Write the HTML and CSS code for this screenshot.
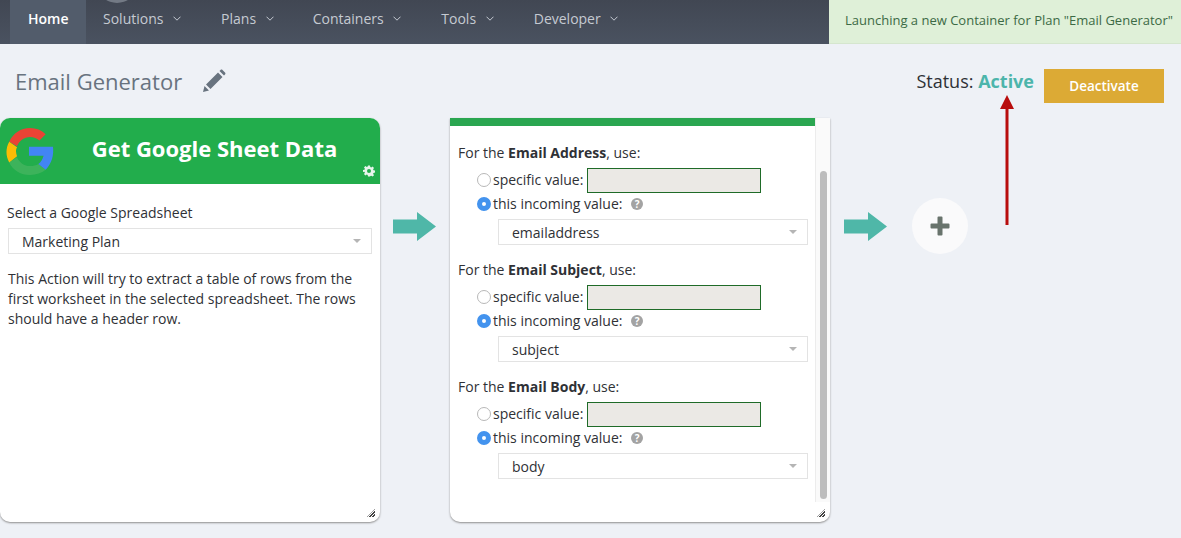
FILE: index.html
```html
<!DOCTYPE html>
<html lang="en">
<head>
    <meta charset="UTF-8">
    <meta name="viewport" content="width=device-width, initial-scale=1.0">
    <title>Email Generator</title>
    <link rel="stylesheet" href="styles.css">
</head>
<body>
    <header class="topbar">
        <nav class="nav">
            <span class="nav-avatar"></span>
            <a class="nav-item nav-home">Home</a>
            <a class="nav-item nav-solutions">Solutions <svg class="chevron" viewBox="0 0 8 5"><path d="M.5.7 4 4.2 7.500.7"/></svg></a>
            <a class="nav-item nav-plans">Plans <svg class="chevron" viewBox="0 0 8 5"><path d="M.5.7 4 4.2 7.500.7"/></svg></a>
            <a class="nav-item nav-containers">Containers <svg class="chevron" viewBox="0 0 8 5"><path d="M.5.7 4 4.2 7.500.7"/></svg></a>
            <a class="nav-item nav-tools">Tools <svg class="chevron" viewBox="0 0 8 5"><path d="M.5.7 4 4.2 7.500.7"/></svg></a>
            <a class="nav-item">Developer <svg class="chevron" viewBox="0 0 8 5"><path d="M.5.7 4 4.2 7.500.7"/></svg></a>
        </nav>
        <div class="notice">Launching a new Container for Plan "Email Generator"</div>
    </header>

    <section class="titlebar">
        <h1 class="plan-name">Email Generator</h1>
        <svg class="pencil" viewBox="0 0 24 24"><path d="M1 23l1.500-6 4.500 4.500z M4 15.500 16 3.500l4.500 4.500L8.500 20z M17.500 2l1-1c.6-.6 1.400-.6 2 0L23 3.500c.6.6.6 1.400 0 2l-1 1z"/></svg>
        <div class="status">Status: <b class="status-active">Active</b></div>
        <button class="deactivate">Deactivate</button>
    </section>

    <main class="flow">
        <article class="card card-sheet">
            <div class="sheet-head">
                <svg class="google" viewBox="0 0 48 48">
                    <path fill="#ea4335" d="M5 15C9 7 16 2 25 2c6 0 11 2 15 6l-6 6c-2.500-2.300-5.500-3.500-9-3.500-5.500 0-10.500 3.500-12.500 9z"/>
                    <path fill="#fbbc05" d="M5 15c-3.500 6.500-3.500 13 0 20l7.500-6c-1.300-3.500-1.300-6.500 0-8.500z"/>
                    <path fill="#5fbb6e" opacity=".45" d="M5 35c4 8 11 12 20 12 6 0 11-2 15-5l-7-5.500c-2 1.300-4.800 2-8 2-5.500 0-10.500-3.500-12.500-8.500z"/>
                    <path fill="#4285f4" d="M24 20h23c1 8-1 16-7 22l-7-5.500c2.500-2 4-4.500 5-8H24z"/>
                </svg>
                <h2 class="sheet-title">Get Google Sheet Data</h2>
                <svg class="gear" viewBox="0 0 24 24"><path fill-rule="evenodd" d="M10 1h4l.6 3.200 1.900.8 2.700-1.800 2.800 2.800-1.800 2.700.8 1.900 3.200.6v4l-3.200.6-.8 1.900 1.800 2.700-2.800 2.800-2.700-1.800-1.900.8L14 23h-4l-.6-3.200-1.900-.8-2.700 1.800-2.800-2.800 1.800-2.700-.8-1.900L-.2 14v-4l3.200-.6.8-1.900L2 4.800 4.800 2l2.700 1.800 1.900-.8zM12 8a4 4 0 1 0 0 8 4 4 0 0 0 0-8z"/></svg>
            </div>
            <div class="sheet-body">
                <label class="sheet-label">Select a Google Spreadsheet</label>
                <div class="select">Marketing Plan<span class="caret"></span></div>
                <p class="sheet-help">This Action will try to extract a table of rows from the first worksheet in the selected spreadsheet. The rows should have a header row.</p>
            </div>
            <span class="grip"></span>
        </article>

        <svg class="arrow" viewBox="0 0 43 29"><path d="M0 7.500h24V0l19 14.500L24 29v-7.500H0z"/></svg>

        <article class="card card-mail">
            <div class="mail-scroll">
                <div class="mail-content">
                    <div class="mail-stripe"></div>
                    <div class="field">
                        <div class="field-title">For the <b>Email Address</b>, use:</div>
                        <div class="choice"><span class="radio"></span>specific value: <span class="value-box"></span></div>
                        <div class="choice"><span class="radio radio-on"></span>this incoming value: <span class="help-dot">?</span></div>
                        <div class="select select-small">emailaddress<span class="caret"></span></div>
                    </div>
                    <div class="field">
                        <div class="field-title">For the <b>Email Subject</b>, use:</div>
                        <div class="choice"><span class="radio"></span>specific value: <span class="value-box"></span></div>
                        <div class="choice"><span class="radio radio-on"></span>this incoming value: <span class="help-dot">?</span></div>
                        <div class="select select-small">subject<span class="caret"></span></div>
                    </div>
                    <div class="field">
                        <div class="field-title">For the <b>Email Body</b>, use:</div>
                        <div class="choice"><span class="radio"></span>specific value: <span class="value-box"></span></div>
                        <div class="choice"><span class="radio radio-on"></span>this incoming value: <span class="help-dot">?</span></div>
                        <div class="select select-small">body<span class="caret"></span></div>
                    </div>
                </div>
                <div class="scrollbar"><span class="scroll-thumb"></span></div>
            </div>
            <span class="grip"></span>
        </article>

        <svg class="arrow" viewBox="0 0 43 29"><path d="M0 7.500h24V0l19 14.500L24 29v-7.500H0z"/></svg>

        <button class="add-action"><svg viewBox="0 0 20 20"><path d="M7.500 1.500a1 1 0 0 1 1-1h3a1 1 0 0 1 1 1v6h6a1 1 0 0 1 1 1v3a1 1 0 0 1-1 1h-6v6a1 1 0 0 1-1 1h-3a1 1 0 0 1-1-1v-6h-6a1 1 0 0 1-1-1v-3a1 1 0 0 1 1-1h6z"/></svg></button>
    </main>

    <!-- annotation pointing at the status -->
    <svg class="callout" viewBox="0 0 16 130"><path d="M8 0l7 14H9.500v116h-3V14H1z"/></svg>
</body>
</html>
```

FILE: styles.css
```css
body {
    margin: 0;
    height: 538px;
    overflow: hidden;
    position: relative;
    background: #eef1f6;
    color: #2f3136;
    font-family: "Open Sans", sans-serif;
    font-size: 14px;
}

.topbar {
    display: flex;
    height: 44px;
}
.nav {
    flex: 1;
    display: flex;
    padding-left: 10px;
    position: relative;
    background: linear-gradient(#414753, #4a5260);
}
.nav-avatar {
    position: absolute;
    left: 99px;
    top: -27px;
    width: 36px;
    height: 30px;
    border-radius: 50%;
    background: #737a85;
}
.nav-item {
    display: flex;
    align-items: center;
    height: 37px;
    color: #c5cad2;
    white-space: pre;
}
.nav-home {
    height: 44px;
    align-items: flex-start;
    line-height: 38px;
    width: 76px;
    box-sizing: border-box;
    margin-right: 17px;
    padding-left: 18px;
    background: #525c6b;
    color: #fff;
    font-weight: 600;
}
.nav-solutions { margin-right: 40px; }
.nav-plans { margin-right: 39px; }
.nav-containers { margin-right: 40px; }
.nav-tools { margin-right: 40px; }
.chevron {
    width: 8px;
    height: 5px;
    margin-left: 6px;
    fill: none;
    stroke: #c5cad2;
    stroke-width: 1;
}
.notice {
    width: 352px;
    box-sizing: border-box;
    padding: 11px 0 0 16px;
    background: #dff0d8;
    border-bottom: 1px solid #d5e6ce;
    color: #3c6a45;
    font-size: 13px;
    white-space: nowrap;
}

.titlebar {
    display: flex;
    align-items: center;
    height: 74px;
    padding: 0 17px 0 15px;
}
.plan-name {
    margin: 0 20px 0 0;
    color: #68737f;
    font-size: 22px;
    font-weight: 400;
}
.pencil {
    width: 24px;
    height: 24px;
    fill: #68737f;
}
.status {
    margin-left: auto;
    margin-right: 10px;
    font-size: 18px;
}
.status-active {
    color: #4cb5ab;
    font-weight: 700;
}
.deactivate {
    width: 120px;
    height: 34px;
    margin-top: 10px;
    border: 0;
    background: #dcaa35;
    color: #fff;
    font-family: inherit;
    font-size: 13.500px;
    font-weight: 600;
}

.flow {
    display: flex;
    align-items: flex-start;
}
.card {
    flex: none;
    width: 380px;
    height: 404px;
    position: relative;
    overflow: hidden;
    box-sizing: border-box;
    border-radius: 10px;
    background: #fff;
    box-shadow: 0 1px 2px #8f8f8f;
}
.card-mail {
    border-radius: 0 0 10px 10px;
    background: #fff;
}
.sheet-head {
    height: 66px;
    position: relative;
    display: flex;
    align-items: center;
    justify-content: center;
    background: #22ad4c;
}
.google {
    position: absolute;
    left: 4px;
    top: 8px;
    width: 50px;
    height: 50px;
}
.sheet-title {
    margin: 0 0 6px 49px;
    color: #fff;
    font-size: 22px;
    font-weight: 700;
}
.gear {
    position: absolute;
    right: 5px;
    bottom: 7px;
    width: 12px;
    height: 12px;
    fill: #e8f5ec;
}
.sheet-body {
    padding: 19px 8px 0 7px;
}
.sheet-label {
    display: block;
    margin-bottom: 5px;
    line-height: 20px;
}
.select {
    position: relative;
    height: 26px;
    box-sizing: border-box;
    margin-left: 1px;
    padding-left: 13px;
    border: 1px solid #e3e3e3;
    background: #fff;
    line-height: 26px;
}
.caret {
    position: absolute;
    right: 10px;
    top: 10px;
    border: 4px solid transparent;
    border-top-color: #b5b5b5;
    border-bottom: 0;
}
.sheet-help {
    margin: 15px 0 0 1px;
    line-height: 20px;
}
.grip {
    position: absolute;
    right: 5px;
    bottom: 5px;
    width: 8px;
    height: 8px;
    background: repeating-linear-gradient(135deg, transparent 0 1px, #444 1px 2px);
    clip-path: polygon(100% 0, 100% 100%, 0 100%);
}

.arrow {
    flex: none;
    width: 43px;
    height: 29px;
    margin-top: 94px;
    fill: #4fb7a8;
}
.flow > .card-sheet + .arrow { margin-left: 13px; margin-right: 14px; }
.flow > .card-mail + .arrow { margin-left: 14px; margin-right: 25px; }

.mail-scroll {
    display: flex;
    height: 384px;
}
.mail-content {
    width: 365px;
    flex: none;
}
.mail-stripe {
    height: 8px;
    background: #2aa650;
}
.field {
    padding: 17px 8px 0 8px;
    height: 100px;
}
.field-title {
    line-height: 20px;
    margin-bottom: 5px;
}
.choice {
    display: flex;
    align-items: center;
    box-sizing: border-box;
    height: 24px;
    padding-bottom: 2px;
    margin-left: 19px;
    white-space: pre;
}
.radio {
    width: 12px;
    height: 12px;
    margin-right: 2px;
    margin-top: 2px;
    border: 1px solid #b8b8b8;
    border-radius: 50%;
    background: #fff;
}
.radio-on {
    box-sizing: border-box;
    width: 14px;
    height: 14px;
    border: 5px solid #4393ee;
}
.value-box {
    width: 172px;
    height: 23px;
    margin-top: 2px;
    border: 1px solid #1f6b28;
    background: #ebe9e5;
}
.help-dot {
    width: 12px;
    height: 12px;
    margin-left: 5px;
    margin-top: 2px;
    border-radius: 50%;
    background: #a3a3a3;
    color: #fff;
    font-size: 10px;
    font-weight: 700;
    line-height: 12px;
    text-align: center;
}
.select-small {
    margin: 3px 0 0 40px;
    width: 310px;
    line-height: 25px;
}
.scrollbar {
    flex: 1;
    display: flex;
    flex-direction: column;
    justify-content: flex-end;
    padding: 0 3px 3px 4px;
    background: #fafafa;
    border-left: 1px solid #ececec;
}
.scroll-thumb {
    display: block;
    height: 328px;
    border-radius: 4px;
    background: #bdbdbd;
}

.add-action {
    flex: none;
    width: 56px;
    height: 56px;
    margin-top: 80px;
    padding: 0;
    display: flex;
    align-items: center;
    justify-content: center;
    border: 0;
    border-radius: 50%;
    background: #fafafb;
}
.add-action svg {
    width: 20px;
    height: 20px;
    fill: #68736c;
}

.callout {
    position: absolute;
    left: 999px;
    top: 95px;
    width: 16px;
    height: 130px;
    fill: #b80d0d;
}
```
